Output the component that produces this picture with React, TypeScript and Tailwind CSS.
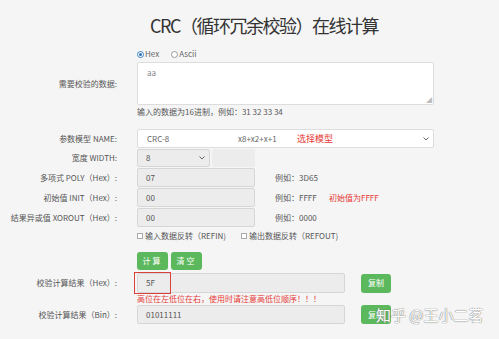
const font = { fontFamily: '"Noto Sans CJK SC", "Liberation Sans", sans-serif' };

function Label({ children }: { children: React.ReactNode }) {
  return <div className="w-[120px] shrink-0 pr-[3px] text-right text-[8px] text-[#555]">{children}</div>;
}

function Chevron() {
  return (
    <svg width="6" height="4" viewBox="0 0 6 4" className="shrink-0">
      <path d="M0.5 0.5 L3 3 L5.5 0.5" fill="none" stroke="#666" strokeWidth="1" />
    </svg>
  );
}

function GreenButton({ children, className = '' }: { children: React.ReactNode; className?: string }) {
  return (
    <div
      className={`flex items-center justify-center rounded-[3px] bg-[#5cb85c] text-[8px] text-white ${className}`}
    >
      {children}
    </div>
  );
}

export default function App() {
  return (
    <div className="relative h-[339px] w-[499px] overflow-hidden bg-[#f5f5f5] text-[#444]" style={font}>
      <div className="flex h-[48px] items-center pt-[2px] pl-[150px]">
        <h1 className="text-[18px] font-normal tracking-[-1.5px] text-[#333]">CRC（循环冗余校验）在线计算</h1>
      </div>

      <div className="ml-[137px] flex h-[12px] items-center gap-[12px] text-[8px] text-[#666]">
        <span className="flex items-center">
          <span className="mr-[1px] flex h-[7px] w-[7px] items-center justify-center rounded-full border border-[#3b82c4] bg-white">
            <span className="h-[3px] w-[3px] rounded-full bg-[#2f6fb6]" />
          </span>
          Hex
        </span>
        <span className="flex items-center">
          <span className="mr-[1px] h-[7px] w-[7px] rounded-full border border-[#999] bg-white" />
          Ascii
        </span>
      </div>

      <div className="mt-[2px] flex items-center">
        <Label>需要校验的数据:</Label>
        <div className="relative ml-[17px] h-[43px] w-[297px] rounded-[2px] border border-[#ddd] bg-white px-[9px] pt-[4px] text-[8px] text-[#888]">
          aa
          <span className="absolute bottom-[1px] right-[1px] text-[6px] leading-none text-[#bbb]">◢</span>
        </div>
      </div>
      <div className="ml-[137px] mt-[1px] h-[12px] text-[8px] leading-[12px] text-[#555]">
        输入的数据为16进制，例如：31 32 33 34
      </div>

      <div className="mt-[11px] flex flex-col gap-[1px]">
        <div className="flex h-[19px] items-center">
          <Label>参数模型 NAME:</Label>
          <div className="ml-[17px] flex h-full w-[297px] items-center rounded-[2px] border border-[#ddd] bg-white pl-[9px] pr-[4px] text-[8px] text-[#666]">
            <span className="w-[91px]">CRC-8</span>
            <span className="w-[59px]">x8+x2+x+1</span>
            <span className="flex-1 text-[9px] text-[#e53935]">选择模型</span>
            <Chevron />
          </div>
        </div>
        <div className="flex h-[18px] items-center">
          <Label>宽度 WIDTH:</Label>
          <div className="ml-[17px] flex h-full items-center">
            <div className="flex h-full w-[73px] items-center justify-between rounded-[2px] border border-[#d6d6d6] bg-[#ececec] pl-[8px] pr-[4px] text-[8px] text-[#555]">
              8
              <Chevron />
            </div>
            <div className="ml-[2px] h-full w-[43px] rounded-[2px] bg-[#ececec]" />
          </div>
        </div>
        {[
          ['多项式 POLY（Hex）:', '07', '例如：3D65', ''],
          ['初始值 INIT（Hex）:', '00', '例如：FFFF', '初始值为FFFF'],
          ['结果异或值 XOROUT（Hex）:', '00', '例如：0000', ''],
        ].map(([label, val, eg, note]) => (
          <div key={label} className="flex h-[19px] items-center">
            <Label>{label}</Label>
            <div className="ml-[17px] flex h-full w-[118px] items-center rounded-[2px] border border-[#d6d6d6] bg-[#ececec] pl-[8px] text-[8px] text-[#555]">
              {val}
            </div>
            <span className="ml-[20px] w-[54px] text-[8px] text-[#555]">{eg}</span>
            {note && <span className="text-[8px] text-[#e53935]">{note}</span>}
          </div>
        ))}
      </div>

      <div className="ml-[137px] mt-[3px] flex h-[12px] items-center text-[8px] text-[#555]">
        <span className="mr-[2px] h-[6px] w-[6px] border border-[#aaa] bg-white" />
        <span className="w-[96px]">输入数据反转（REFIN)</span>
        <span className="mr-[2px] h-[6px] w-[6px] border border-[#aaa] bg-white" />
        <span>输出数据反转（REFOUT)</span>
      </div>

      <div className="ml-[137px] mt-[10px] flex gap-[3px]">
        <GreenButton className="h-[18px] w-[31px] tracking-[2px]">计算</GreenButton>
        <GreenButton className="h-[18px] w-[31px] tracking-[2px]">清空</GreenButton>
      </div>

      <div className="mt-[3px] flex h-[20px] items-center">
        <Label>校验计算结果（Hex）:</Label>
        <div className="relative ml-[17px] flex h-full w-[208px] items-center rounded-[2px] border border-[#d6d6d6] bg-[#ececec] pl-[8px] text-[8px] text-[#555]">
          5F
          <span className="absolute left-[-4px] top-[-2px] h-[22px] w-[37px] border-[1.5px] border-[#d9413c]" />
        </div>
        <GreenButton className="ml-[16px] h-[19px] w-[30px]">复制</GreenButton>
      </div>
      <div className="ml-[137px] h-[11px] text-[8px] leading-[11px] text-[#e53935]">
        高位在左低位在右，使用时请注意高低位顺序！！！
      </div>

      <div className="mt-[1px] flex h-[19px] items-center">
        <Label>校验计算结果（Bin）:</Label>
        <div className="ml-[17px] flex h-full w-[208px] items-center rounded-[2px] border border-[#d6d6d6] bg-[#ececec] pl-[8px] text-[8px] text-[#555]">
          01011111
        </div>
        <GreenButton className="ml-[16px] h-[19px] w-[30px]">复制</GreenButton>
      </div>

      <div
        className="absolute left-[376px] top-[307px] text-[15px] leading-none text-white"
        style={{ textShadow: '0 0 1px #777, 0 0 1px #777' }}
      >
        知乎 @王小二茗
      </div>
    </div>
  );
}
